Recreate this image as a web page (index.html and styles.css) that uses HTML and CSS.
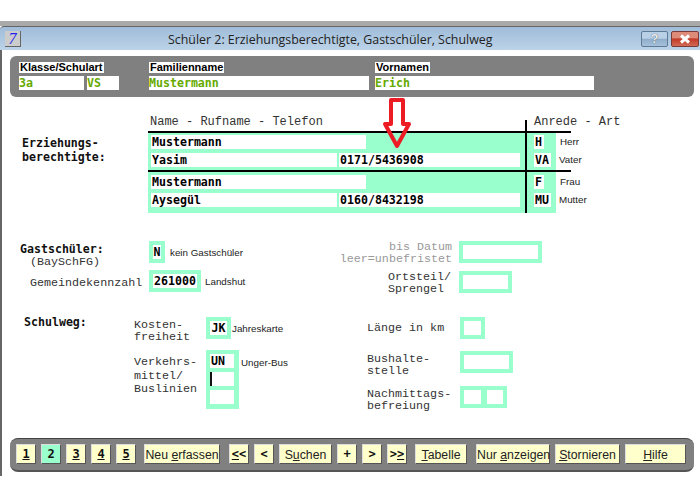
FILE: index.html
```html
<!DOCTYPE html>
<html lang="de">
  <head>
    <meta charset="UTF-8" />
    <title>Schüler 2</title>
    <link rel="stylesheet" href="styles.css">
  </head>
  <body>
    <div class="fenster">
      <div class="titelleiste">
        <div class="app-icon">7</div>
        <div class="titel">Schüler 2: Erziehungsberechtigte, Gastschüler, Schulweg</div>
        <div class="tb-btn tb-help">?</div>
        <div class="tb-btn tb-close">
          <svg width="14" height="10" viewBox="0 0 14 10"><path d="M3 1.5 L11 8.5 M11 1.5 L3 8.5" stroke="#fff" stroke-width="3" fill="none" /></svg>
        </div>
      </div>

      <div class="inhalt">
        <div class="kopf">
          <div class="kopf-feld f-klasse">
            <div class="kopf-label">Klasse/Schulart</div>
            <div class="kopf-werte">
              <div class="kopf-wert w-klasse">3a</div>
              <div class="kopf-wert w-art">VS</div>
            </div>
          </div>
          <div class="kopf-feld f-name">
            <div class="kopf-label">Familienname</div>
            <div class="kopf-wert w-name">Mustermann</div>
          </div>
          <div class="kopf-feld">
            <div class="kopf-label">Vornamen</div>
            <div class="kopf-wert w-vorname">Erich</div>
          </div>
        </div>

        <div class="erz">
          <div class="erz-label">Erziehungs-<br>berechtigte:</div>
          <div class="erz-namen">
            <div class="spalten-kopf">Name - Rufname - Telefon</div>
            <div class="gruppe g1">
              <div class="feld f-voll">Mustermann</div>
              <div class="zeile">
                <div class="feld f-ruf">Yasim</div>
                <div class="feld f-tel">0171/5436908</div>
              </div>
            </div>
            <div class="gruppe g2">
              <div class="feld f-voll">Mustermann</div>
              <div class="zeile">
                <div class="feld f-ruf">Aysegül</div>
                <div class="feld f-tel">0160/8432198</div>
              </div>
            </div>
          </div>
          <div class="erz-art">
            <div class="art-kopf">Anrede - Art</div>
            <div class="art-gruppe g1">
              <div class="art-zeile"><div class="feld f-k1">H</div><span class="art-text">Herr</span></div>
              <div class="art-zeile"><div class="feld f-k2">VA</div><span class="art-text">Vater</span></div>
            </div>
            <div class="art-gruppe g2">
              <div class="art-zeile"><div class="feld f-k1">F</div><span class="art-text">Frau</span></div>
              <div class="art-zeile"><div class="feld f-k2">MU</div><span class="art-text">Mutter</span></div>
            </div>
          </div>
        </div>

        <div class="gast">
          <div class="gast-links">
            <div class="reihe">
              <div class="lbl-gast"><b>Gastschüler:</b><br><span class="einzug">(BaySchFG)</span></div>
              <div class="box box-n">N</div>
              <span class="notiz">kein Gastschüler</span>
            </div>
            <div class="reihe r-gemeinde">
              <div class="lbl-gem">Gemeindekennzahl</div>
              <div class="box box-gem">261000</div>
              <span class="notiz">Landshut</span>
            </div>
          </div>
          <div class="gast-rechts">
            <div class="reihe">
              <div class="lbl-rechts grau">bis Datum<br>leer=unbefristet</div>
              <div class="box box-datum"></div>
            </div>
            <div class="reihe r-ort">
              <div class="lbl-rechts"><div class="lbl-ort">Ortsteil/<br>Sprengel</div></div>
              <div class="box box-ort"></div>
            </div>
          </div>
        </div>

        <div class="schulweg">
          <div class="sw-titel">Schulweg:</div>
          <div class="sw-mitte">
            <div class="reihe r-kosten">
              <div class="lbl-sw">Kosten-<br>freiheit</div>
              <div class="box box-jk">JK</div>
              <span class="notiz">Jahreskarte</span>
            </div>
            <div class="reihe r-verkehr">
              <div class="lbl-sw lbl-verkehr">Verkehrs-<br>mittel/<br>Buslinien</div>
              <div class="stapel">
                <div class="feld">UN</div>
                <div class="feld"><span class="cursor"></span></div>
                <div class="feld"></div>
              </div>
              <span class="notiz notiz-bus">Unger-Bus</span>
            </div>
          </div>
          <div class="sw-rechts">
            <div class="reihe">
              <div class="lbl-km">Länge in km</div>
              <div class="box box-km"></div>
            </div>
            <div class="reihe r-halte">
              <div class="lbl-km lbl-eng">Bushalte-<br>stelle</div>
              <div class="box box-ort"></div>
            </div>
            <div class="reihe r-nach">
              <div class="lbl-km lbl-eng">Nachmittags-<br>befreiung</div>
              <div class="doppel"><div class="feld"></div><div class="feld"></div></div>
            </div>
          </div>
        </div>

        <div class="leiste">
          <div class="btn b-zahl"><u>1</u></div>
          <div class="btn b-zahl aktiv">2</div>
          <div class="btn b-zahl"><u>3</u></div>
          <div class="btn b-zahl"><u>4</u></div>
          <div class="btn b-zahl"><u>5</u></div>
          <div class="btn b-neu">Neu <u>e</u>rfassen</div>
          <div class="btn b-zahl b-abstand"><u>&lt;</u>&lt;</div>
          <div class="btn b-zahl">&lt;</div>
          <div class="btn b-suchen">S<u>u</u>chen</div>
          <div class="btn b-zahl">+</div>
          <div class="btn b-zahl">&gt;</div>
          <div class="btn b-zahl">&gt;<u>&gt;</u></div>
          <div class="btn b-tabelle"><u>T</u>abelle</div>
          <div class="btn b-nur">Nur <u>a</u>nzeigen</div>
          <div class="btn b-storno"><u>S</u>tornieren</div>
          <div class="btn b-hilfe"><u>H</u>ilfe</div>
        </div>
      </div>
    </div>

    <!-- roter Pfeil liegt ueber dem Formular -->
    <svg class="pfeil" width="32" height="54" viewBox="0 0 32 54">
      <path d="M9 3 H21 V27 H27 L15 49 L3 27 H9 Z" fill="none" stroke="#ed1c24" stroke-width="4" stroke-linejoin="round" />
    </svg>
  </body>
</html>
```

FILE: styles.css
```css
body {
  margin: 0;
  background: #fff;
  padding-top: 21px;
  font-family: "Liberation Mono", monospace;
  font-size: 11.7px;
  color: #333;
  position: relative;
}
u {
  text-underline-offset: 1px;
}
.fenster {
  border-top: 5px solid #a9a9a9;
}
.titelleiste {
  display: flex;
  align-items: center;
  height: 23px;
  border-top: 1px solid #666;
  background: linear-gradient(#9fbcd9, #bcd3e8);
  border-top-left-radius: 4px;
}
.app-icon {
  width: 15px;
  height: 15px;
  margin-left: 5px;
  background: #ccc;
  border-right: 1px solid #666;
  border-bottom: 1px solid #666;
  color: #2222ee;
  font: italic 16px/15px "Liberation Serif", serif;
  text-align: center;
}
.titel {
  margin-left: 147px;
  width: 473px;
  padding-top: 2px;
  font: 12.4px "Open Sans", sans-serif;
  color: #222;
}
.tb-btn {
  display: flex;
  align-items: center;
  justify-content: center;
  height: 14px;
  border: 1px solid #5f7a94;
  border-radius: 2px;
}
.tb-help {
  width: 25px;
  background: linear-gradient(#b9d0e6 45%, #8fadca 50%, #a5c0da);
  color: #e8eef4;
  font: bold 13px "Liberation Sans", sans-serif;
  text-shadow: 0 0 1px #333;
}
.tb-close {
  width: 26px;
  margin-left: 3px;
  background: linear-gradient(#dd8a78 40%, #c23a28 50%, #d26a55);
  border-color: #7a3a3a;
}

.inhalt {
  height: 426px;
  box-sizing: border-box;
  border-left: 2px solid #666;
  padding: 6px 6px 0 8px;
}
.kopf {
  display: flex;
  height: 41px;
  box-sizing: border-box;
  padding: 6px 0 0 9px;
  background: #808080;
  border-radius: 6px;
}
.f-klasse {
  width: 130px;
}
.f-name {
  width: 226px;
}
.kopf-label {
  display: table;
  height: 11px;
  padding: 0 1px;
  background: #fff;
  color: #000;
  font: bold 11px/11px "Liberation Sans", sans-serif;
}
.kopf-werte {
  display: flex;
  gap: 3px;
}
.kopf-wert {
  height: 14px;
  margin-top: 3px;
  background: #fff;
  color: #66aa00;
  font: bold 11.6px/15px "DejaVu Sans Mono", monospace;
}
.w-klasse { width: 65px; }
.w-art { width: 32px; }
.w-name { width: 220px; }
.w-vorname { width: 219px; }

/* Erziehungsberechtigte */
.erz {
  display: flex;
  height: 99px;
  margin-top: 17px;
}
.erz-label {
  width: 126px;
  padding: 22px 0 0 12px;
  color: #111;
  font: bold 11.6px/14px "DejaVu Sans Mono", monospace;
}
.erz-namen {
  width: 377px;
}
.spalten-kopf {
  height: 17px;
  box-sizing: border-box;
  padding: 2px 0 0 2px;
  font-size: 12px;
  line-height: 13px;
}
.gruppe {
  background: #99ffcc;
  border-top: 2px solid #000;
  padding: 2px 5px 3px 3px;
}
.gruppe.g2 {
  padding-top: 3px;
  padding-bottom: 6px;
}
.zeile {
  display: flex;
  gap: 2px;
  margin-top: 4px;
}
.feld {
  height: 14px;
  background: #fff;
  color: #000;
  font: bold 11.6px/14px "DejaVu Sans Mono", monospace;
  padding-left: 1px;
  box-sizing: border-box;
}
.f-voll { width: 215px; }
.f-ruf { width: 186px; }
.f-tel { width: 181px; }
.f-k1 { width: 10px; flex: none; }
.f-k2 { width: 17px; flex: none; }

.erz-art {
  width: 46px;
  margin-top: 6px;
  border-left: 2px solid #000;
  box-sizing: border-box;
}
.art-kopf {
  width: 100px;
  height: 15px;
  margin-top: -4px;
  padding-left: 7px;
  font-size: 12px;
  line-height: 13px;
  white-space: nowrap;
}
.art-gruppe {
  display: flex;
  flex-direction: column;
  gap: 4px;
  width: 44px;
  border-top: 2px solid #000;
  padding: 2px 0 3px 7px;
  box-sizing: border-box;
  background: linear-gradient(to right, #99ffcc 29px, #fff 29px);
}
.art-gruppe.g2 {
  padding-top: 3px;
  padding-bottom: 6px;
}
.art-zeile {
  display: flex;
  height: 14px;
}
.art-text {
  font: 9.8px/14px "Liberation Sans", sans-serif;
  color: #222;
  white-space: nowrap;
}
.art-zeile .f-k1 {
  margin-right: 16px;
}
.art-zeile .f-k2 {
  margin-right: 8px;
}
.notiz {
  margin-left: 5px;
  font: 9.8px/24px "Liberation Sans", sans-serif;
  color: #222;
  white-space: nowrap;
}

/* Gastschueler */
.gast {
  display: flex;
  margin-top: 28px;
}
.gast-links {
  width: 310px;
}
.reihe {
  display: flex;
  height: 22px;
}
.lbl-gast {
  width: 129px;
  padding: 2px 0 0 10px;
  line-height: 12px;
}
.lbl-gast b {
  color: #111;
  font: bold 11.6px/12px "DejaVu Sans Mono", monospace;
}
.einzug {
  margin-left: 10px;
}
.lbl-gem {
  width: 119px;
  padding: 7px 0 0 20px;
  line-height: 13px;
}
.box {
  height: 22px;
  box-sizing: border-box;
  border: 4px solid #99ffcc;
  color: #000;
  font: bold 11.6px/14px "DejaVu Sans Mono", monospace;
  text-align: center;
}
.box-n { width: 16px; }
.box-gem { width: 52px; }
.r-gemeinde {
  margin-top: 7px;
}
.r-gemeinde .notiz {
  margin-left: 4px;
}
.lbl-rechts {
  width: 132px;
  margin-right: 7px;
  text-align: right;
  line-height: 12px;
}
.grau {
  color: #999;
}
.lbl-ort {
  text-align: left;
  margin-left: 68px;
}
.box-datum { width: 83px; }
.box-ort { width: 53px; }
.r-ort {
  margin-top: 8px;
}

/* Schulweg */
.schulweg {
  display: flex;
  margin-top: 24px;
}
.sw-titel {
  width: 110px;
  margin-top: -1px;
  padding-left: 14px;
  color: #111;
  font: bold 11.6px/12px "DejaVu Sans Mono", monospace;
}
.sw-mitte {
  width: 233px;
}
.lbl-sw {
  width: 72px;
  line-height: 12px;
  padding-top: 2px;
}
.lbl-verkehr {
  line-height: 13.5px;
  padding-top: 6px;
}
.box-jk { width: 25px; }
.r-kosten .notiz {
  margin-left: 1px;
}
.r-verkehr {
  height: 59px;
  margin-top: 11px;
}
.r-verkehr .notiz-bus {
  margin-left: 2px;
  line-height: 26px;
}
.stapel {
  display: flex;
  flex-direction: column;
  gap: 4px;
  width: 33px;
  box-sizing: border-box;
  padding: 4px 5px 5px 4px;
  background: #99ffcc;
}
.cursor {
  display: block;
  width: 2px;
  height: 14px;
  margin-left: -1px;
  background: #111;
}
.lbl-km {
  width: 93px;
  padding-top: 5px;
  line-height: 12px;
}
.lbl-eng {
  padding-top: 2px;
}
.box-km { width: 25px; }
.r-halte {
  margin-top: 12px;
}
.r-nach {
  margin-top: 13px;
}
.doppel {
  display: flex;
  gap: 6px;
  width: 47px;
  height: 22px;
  box-sizing: border-box;
  padding: 4px;
  background: #99ffcc;
}
.doppel .feld {
  width: 17px;
}
.doppel .feld + .feld {
  width: 16px;
}

/* Knopfleiste unten */
.leiste {
  display: flex;
  gap: 5px;
  height: 34px;
  box-sizing: border-box;
  margin-top: 29px;
  padding: 5px 0 0 6px;
  background: #808080;
  border-radius: 8px;
  border-top: 1px solid #444;
  border-bottom: 2px solid #555;
}
.btn {
  height: 20px;
  box-sizing: border-box;
  background: #ffffcc;
  border: 1px solid #ddd;
  border-right-color: #555;
  border-bottom-color: #555;
  color: #222;
  font: 12.3px/20px "Liberation Sans", sans-serif;
  text-align: center;
  white-space: nowrap;
}
.b-zahl {
  width: 20px;
  font: bold 12px/19px "DejaVu Sans Mono", monospace;
  color: #111;
}
.aktiv {
  background: #99ffcc;
}
.b-neu { width: 76px; margin-left: 3px; }
.b-abstand { margin-left: 4px; }
.b-suchen { width: 53px; }
.b-tabelle { width: 52px; margin-left: 3px; }
.b-nur { width: 74px; margin-left: 4px; }
.b-storno { width: 65px; }
.b-hilfe { width: 61px; }

.pfeil {
  position: absolute;
  left: 382px;
  top: 97px;
}
```
